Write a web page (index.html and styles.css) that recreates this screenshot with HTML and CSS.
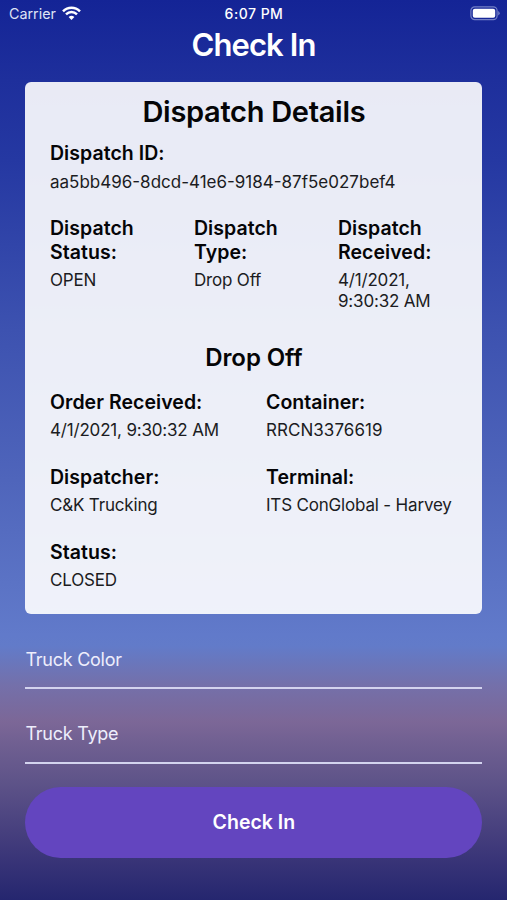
FILE: index.html
```html
<!DOCTYPE html>
<html lang="en">
<head>
    <meta charset="UTF-8">
    <meta name="viewport" content="width=device-width, initial-scale=1.0">
    <title>Check In</title>
    <link rel="stylesheet" href="styles.css">
</head>
<body>
    <div class="status-bar">
        <div class="carrier">
            <span>Carrier</span>
            <svg class="wifi" width="19" height="15" viewBox="0 0 19 15">
                <path d="M1 5.3 C5.8 0.5 13.2 0.5 18 5.3" />
                <path d="M4 8.4 C7.2 5.3 11.8 5.3 15 8.4" />
                <path class="dot" d="M6.6 11 Q9.5 8.6 12.4 11 L9.5 14 Z" />
            </svg>
        </div>
        <span class="time">6:07 PM</span>
        <svg class="battery" width="30" height="15" viewBox="0 0 30 15">
            <rect class="battery-case" x="0.9" y="0.9" width="26.2" height="12.7" rx="3.8" />
            <rect class="battery-level" x="2.8" y="2.8" width="22.4" height="8.9" rx="2" />
            <path class="battery-tip" d="M28.2 5 Q29.7 5.8 29.7 7.2 Q29.7 8.7 28.2 9.5 Z" />
        </svg>
    </div>

    <h1>Check In</h1>

    <div class="card">
        <h2>Dispatch Details</h2>
        <div class="item">
            <h4>Dispatch ID:</h4>
            <p class="dispatch-id">aa5bb496-8dcd-41e6-9184-87f5e027bef4</p>
        </div>
        <div class="thirds">
            <div class="item">
                <h4>Dispatch Status:</h4>
                <p>OPEN</p>
            </div>
            <div class="item">
                <h4>Dispatch Type:</h4>
                <p>Drop Off</p>
            </div>
            <div class="item">
                <h4>Dispatch Received:</h4>
                <p>4/1/2021, 9:30:32 AM</p>
            </div>
        </div>

        <h3>Drop Off</h3>
        <div class="halves">
            <div class="item">
                <h4>Order Received:</h4>
                <p>4/1/2021, 9:30:32 AM</p>
            </div>
            <div class="item">
                <h4>Container:</h4>
                <p class="container-id">RRCN3376619</p>
            </div>
            <div class="item">
                <h4>Dispatcher:</h4>
                <p>C&amp;K Trucking</p>
            </div>
            <div class="item">
                <h4>Terminal:</h4>
                <p>ITS ConGlobal - Harvey</p>
            </div>
            <div class="item">
                <h4>Status:</h4>
                <p>CLOSED</p>
            </div>
        </div>
    </div>

    <form>
        <input type="text" name="color" placeholder="Truck Color">
        <input type="text" name="type" placeholder="Truck Type">
        <button type="submit">Check In</button>
    </form>
</body>
</html>
```
FILE: styles.css
```css
* {
    box-sizing: border-box;
}

body {
    margin: 0;
    height: 900px;
    overflow: hidden;
    font-family: Inter, "Liberation Sans", sans-serif;
    color: #fff;
    background: linear-gradient(#142496 0, #1e2f9c 80px, #2538a2 160px, #3d52b0 330px, #4f65bb 480px, #617aca 635px, #627bc9 646px, #7470aa 685px, #7c6797 722px, #6f5f91 745px, #5f5489 780px, #3a3578 858px, #25266f 900px);
}

h1, h2, h3, h4, p {
    margin: 0;
    font-weight: 600;
}

.status-bar {
    display: grid;
    grid-template-columns: 1fr auto 1fr;
    align-items: center;
    height: 26px;
    padding: 1px 7px 0 9px;
    font-size: 14.3px;
}

.carrier {
    display: flex;
    align-items: center;
    gap: 6px;
    color: #dfe3f5;
}

.wifi {
    fill: none;
    stroke: #fff;
    stroke-width: 2.5;
}

.wifi .dot {
    fill: #fff;
    stroke: none;
}

.time {
    margin-right: 1px;
    font-size: 14px;
    font-weight: 500;
    letter-spacing: 0.5px;
}

.battery {
    justify-self: end;
}

.battery-case {
    fill: none;
    stroke: #7480c6;
    stroke-width: 1.2;
}

.battery-level {
    fill: #fff;
}

.battery-tip {
    fill: #7480c6;
}

h1 {
    font-size: 31px;
    line-height: 38px;
    letter-spacing: -0.9px;
    text-align: center;
}

.card {
    width: 457px;
    height: 532px;
    margin: 18px 0 0 25.4px;
    padding: 12px 24.6px 0;
    border-radius: 6px;
    color: #050507;
    background-color: rgba(255, 255, 255, 0.9);
}

h2 {
    margin-bottom: 12px;
    font-size: 29px;
    line-height: 36px;
    letter-spacing: -0.3px;
    text-align: center;
}

h3 {
    margin: 7px 0 17.5px;
    font-size: 24px;
    line-height: 30px;
    letter-spacing: -0.1px;
    text-align: center;
}

h4 {
    margin-bottom: 6px;
    font-size: 19.5px;
    line-height: 23.5px;
    letter-spacing: 0.05px;
}

p {
    font-size: 17px;
    line-height: 20.5px;
    font-weight: 400;
    letter-spacing: -0.18px;
    color: #1b1c22;
}

.dispatch-id {
    letter-spacing: 0;
}

.container-id {
    letter-spacing: 0.05px;
}

.item {
    padding-bottom: 25px;
}

.thirds {
    display: grid;
    grid-template-columns: 120px 120px 110px;
    gap: 24px;
}

.halves {
    display: grid;
    grid-template-columns: 216px 1fr;
}

form {
    width: 457px;
    margin: 28px 0 0 25.4px;
}

input {
    display: block;
    width: 100%;
    height: 47px;
    margin-bottom: 27.5px;
    padding: 0 0 11px;
    border: none;
    border-bottom: 2px solid #d3d3ee;
    border-radius: 0;
    outline: none;
    background: none;
    font: 400 18px Inter, sans-serif;
    letter-spacing: -0.25px;
    color: #fff;
}

input::placeholder {
    color: #eeeefc;
}

button {
    display: block;
    width: 100%;
    height: 71px;
    margin-top: -4.5px;
    border: none;
    border-radius: 36px;
    font: 600 19.5px Inter, sans-serif;
    color: #fff;
    background-color: #6345bf;
    cursor: pointer;
}
```
